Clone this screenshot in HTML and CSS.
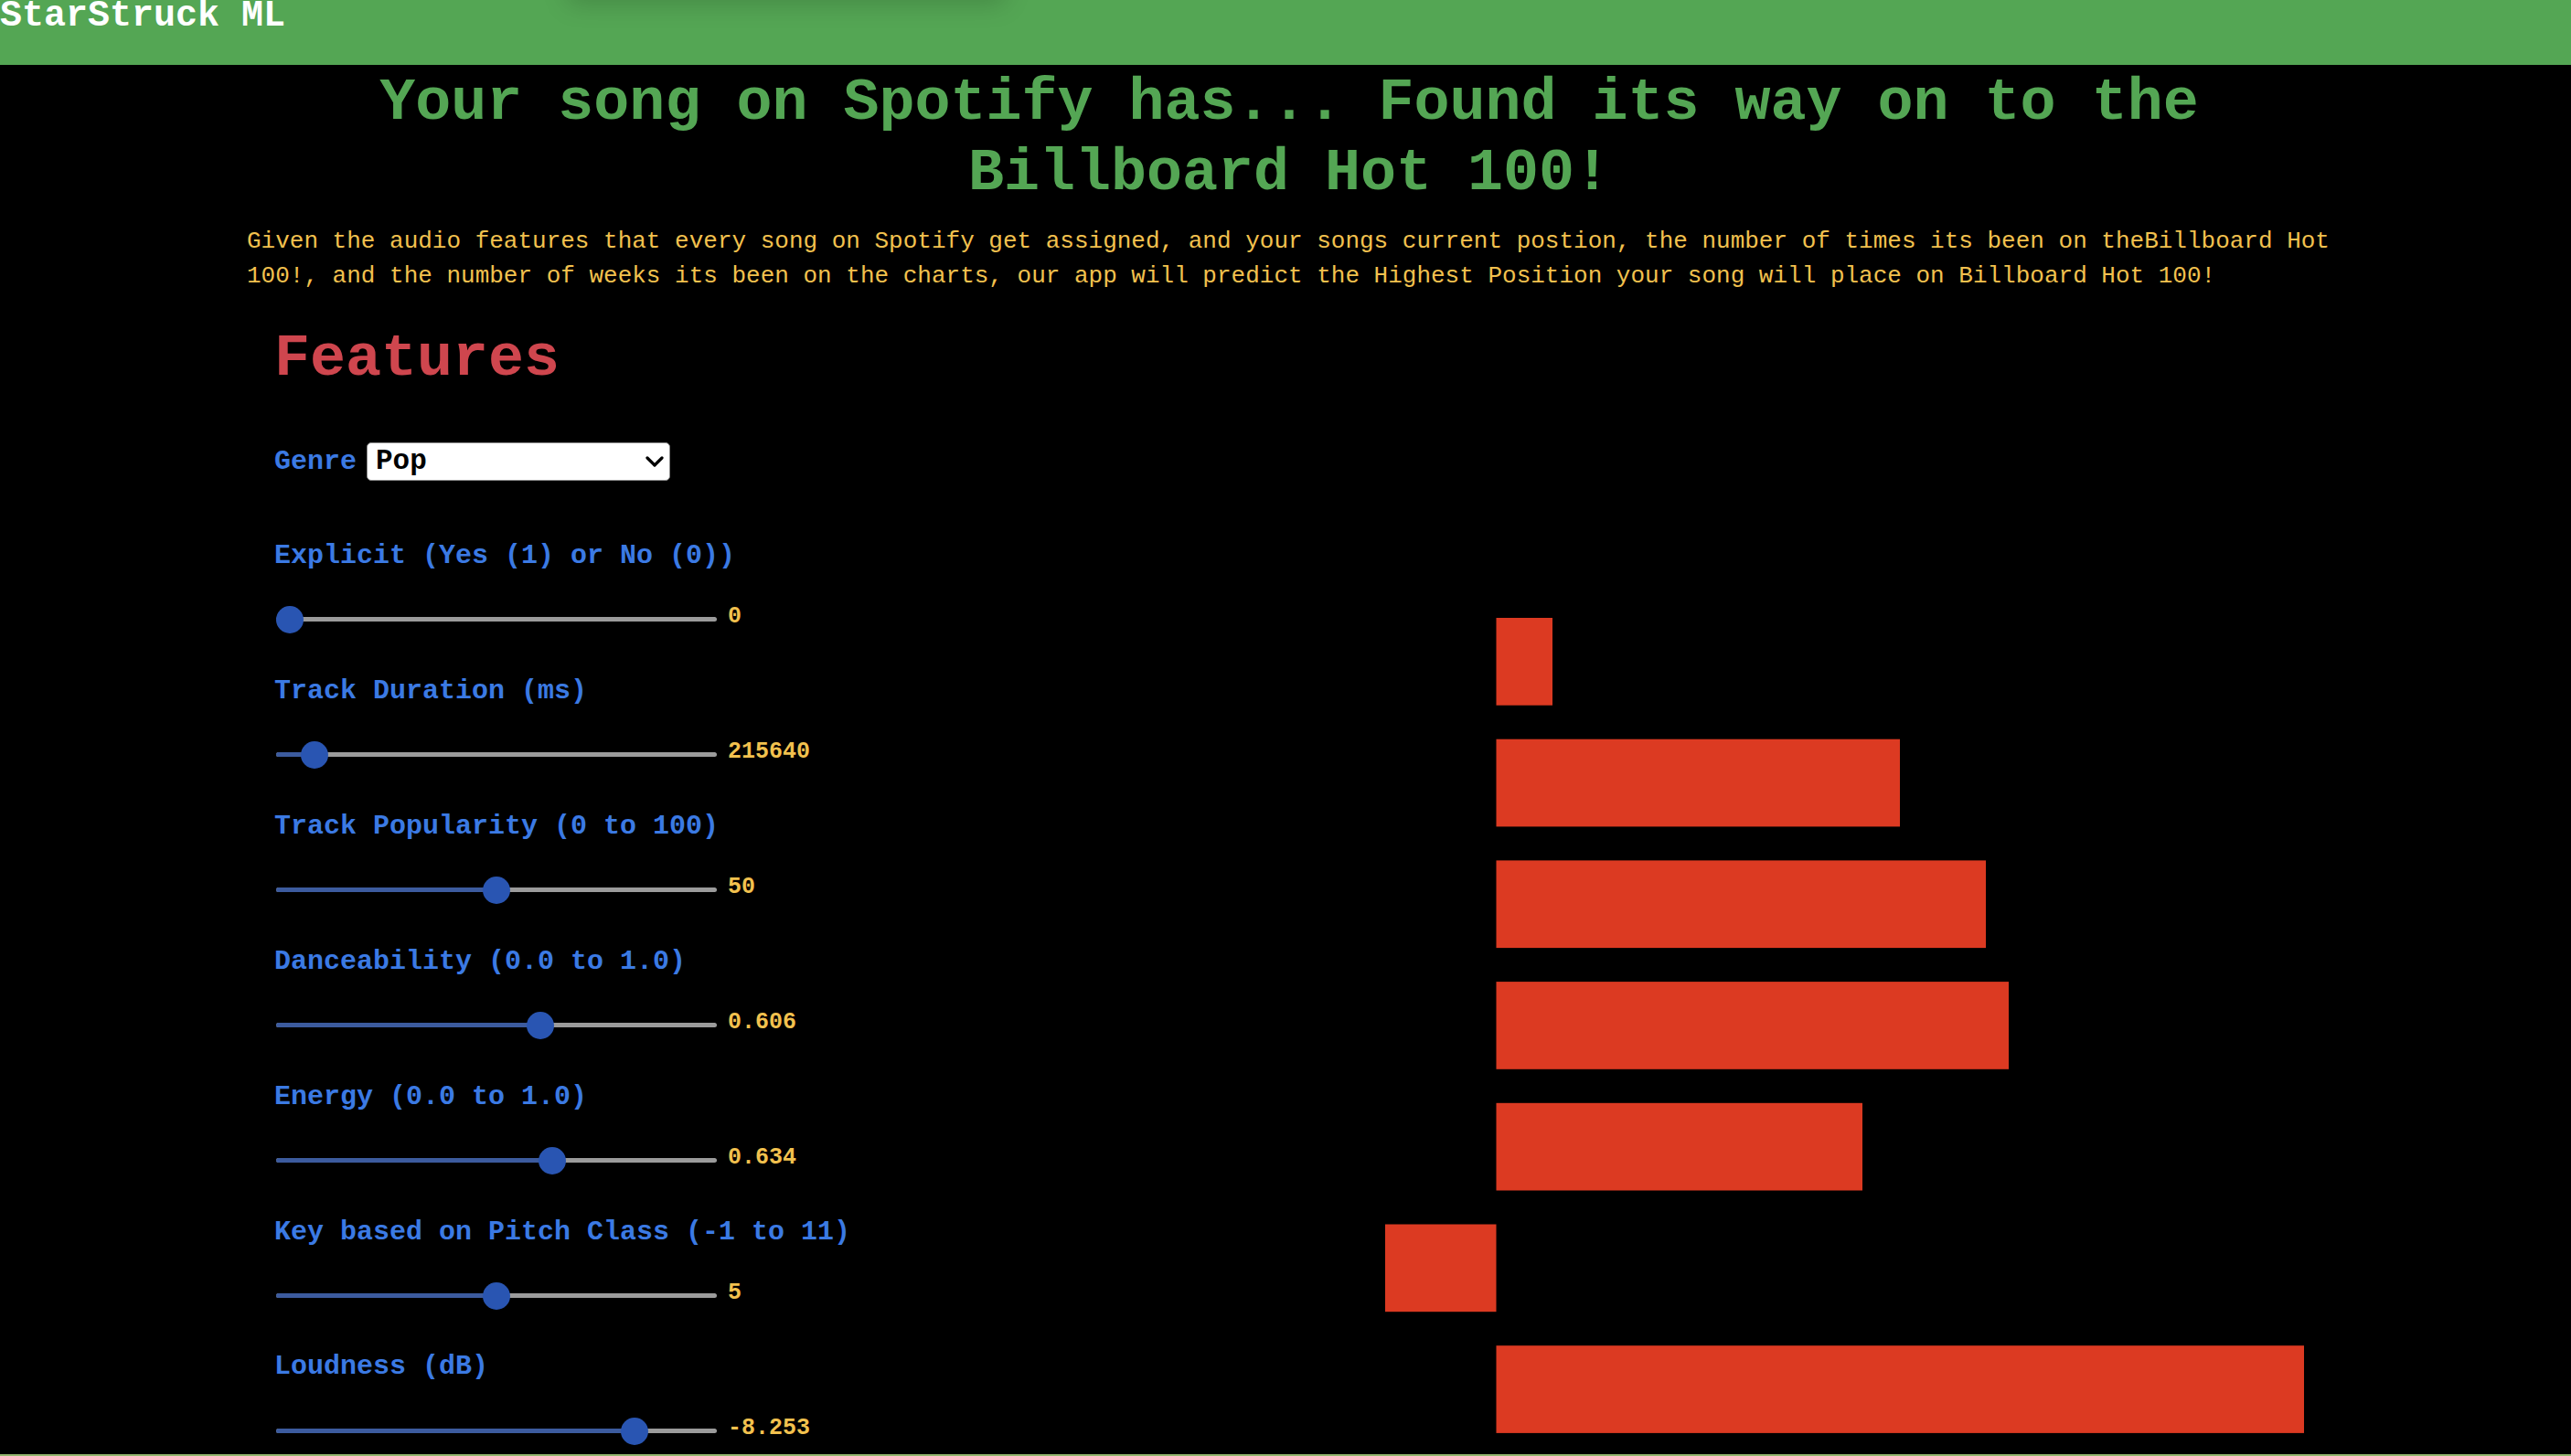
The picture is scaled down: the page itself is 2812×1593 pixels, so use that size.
FILE: index.html
```html
<!DOCTYPE html>
<html lang="en">
<head>
<meta charset="utf-8">
<title>StarStruck ML</title>
<link rel="stylesheet" href="styles.css">
</head>
<body>
<header class="topbar">
  <span class="brand">StarStruck ML</span>
  <div class="topbar-shade"></div>
</header>

<h1 class="headline">Your song on Spotify has... Found its way on to the Billboard Hot 100!</h1>

<p class="intro">Given the audio features that every song on Spotify get assigned, and your songs current postion, the number of times its been on theBillboard Hot 100!, and the number of weeks its been on the charts, our app will predict the Highest Position your song will place on Billboard Hot 100!</p>

<main class="main">
  <section class="features">
    <h2 class="features-title">Features</h2>

    <div class="genre-row">
      <label class="field-label" for="genre">Genre</label>
      <div class="select-wrap">
        <select id="genre" class="genre-select">
          <option>Pop</option>
          <option>Rock</option>
          <option>Hip-Hop</option>
          <option>Country</option>
        </select>
        <svg class="chevron" width="20" height="12" viewBox="0 0 20 12"><path d="M2 2 L10 10 L18 2" fill="none" stroke="#000" stroke-width="3.2" stroke-linecap="round" stroke-linejoin="round"/></svg>
      </div>
    </div>

    <div class="feature">
      <div class="field-label">Explicit (Yes (1) or No (0))</div>
      <div class="slider-row">
        <div class="slider" style="--p:0"><div class="slider-fill"></div><div class="slider-thumb"></div></div>
        <span class="slider-value">0</span>
      </div>
    </div>

    <div class="feature">
      <div class="field-label">Track Duration (ms)</div>
      <div class="slider-row">
        <div class="slider" style="--p:0.06"><div class="slider-fill"></div><div class="slider-thumb"></div></div>
        <span class="slider-value">215640</span>
      </div>
    </div>

    <div class="feature">
      <div class="field-label">Track Popularity (0 to 100)</div>
      <div class="slider-row">
        <div class="slider" style="--p:0.5"><div class="slider-fill"></div><div class="slider-thumb"></div></div>
        <span class="slider-value">50</span>
      </div>
    </div>

    <div class="feature">
      <div class="field-label">Danceability (0.0 to 1.0)</div>
      <div class="slider-row">
        <div class="slider" style="--p:0.606"><div class="slider-fill"></div><div class="slider-thumb"></div></div>
        <span class="slider-value">0.606</span>
      </div>
    </div>

    <div class="feature">
      <div class="field-label">Energy (0.0 to 1.0)</div>
      <div class="slider-row">
        <div class="slider" style="--p:0.634"><div class="slider-fill"></div><div class="slider-thumb"></div></div>
        <span class="slider-value">0.634</span>
      </div>
    </div>

    <div class="feature">
      <div class="field-label">Key based on Pitch Class (-1 to 11)</div>
      <div class="slider-row">
        <div class="slider" style="--p:0.5"><div class="slider-fill"></div><div class="slider-thumb"></div></div>
        <span class="slider-value">5</span>
      </div>
    </div>

    <div class="feature">
      <div class="field-label">Loudness (dB)</div>
      <div class="slider-row">
        <div class="slider" style="--p:0.834"><div class="slider-fill"></div><div class="slider-thumb"></div></div>
        <span class="slider-value">-8.253</span>
      </div>
    </div>
  </section>

  <section class="chart">
    <svg class="bars" width="1120" height="960" viewBox="0 0 1120 960">
      <rect x="156.5" y="36" width="61.5" height="95.7"/>
      <rect x="156.5" y="168.7" width="441.5" height="95.7"/>
      <rect x="156.5" y="301.4" width="535.5" height="95.7"/>
      <rect x="156.5" y="434.1" width="560.5" height="95.7"/>
      <rect x="156.5" y="566.8" width="400.5" height="95.7"/>
      <rect x="35" y="699.5" width="121.5" height="95.7"/>
      <rect x="156.5" y="832.2" width="883.5" height="95.7"/>
    </svg>
  </section>
</main>

<div class="bottom-edge"></div>
</body>
</html>
```

FILE: styles.css
```css
html, body {
  margin: 0;
  padding: 0;
  background: #000;
}

body {
  font-family: "Liberation Mono", "Courier New", monospace;
  font-weight: bold;
  overflow: hidden;
}

.topbar {
  position: relative;
  height: 71px;
  background: #54a654;
}

.brand {
  display: block;
  font-size: 40px;
  line-height: 35px;
  color: #fff;
  font-weight: bold;
}

.topbar-shade {
  position: absolute;
  top: -30px;
  left: 625px;
  width: 470px;
  height: 30px;
  box-shadow: 0 0 28px 4px rgba(0, 0, 0, 0.18);
}

.headline {
  width: 2200px;
  margin: 4px auto 0;
  padding-left: 8px;
  font-size: 65px;
  line-height: 77px;
  text-align: center;
  color: #54a654;
  font-weight: bold;
}

.intro {
  width: 2310px;
  margin: 17px 0 0 270px;
  font-size: 26px;
  line-height: 37.5px;
  font-weight: normal;
  color: #f2c14e;
}

.main {
  display: flex;
  padding-left: 300px;
}

.features {
  width: 1180px;
  flex: none;
}

.features-title {
  margin: 32.2px 0 0;
  font-size: 65px;
  line-height: 80px;
  color: #cf464e;
  font-weight: bold;
}

.genre-row {
  display: flex;
  align-items: center;
  gap: 11px;
  height: 42px;
  margin-top: 50.4px;
}

.field-label {
  font-size: 30px;
  line-height: 40px;
  color: #3b7ae4;
  font-weight: bold;
}

.select-wrap {
  position: relative;
  width: 332px;
  height: 42px;
}

.genre-select {
  appearance: none;
  -webkit-appearance: none;
  box-sizing: border-box;
  width: 100%;
  height: 100%;
  margin: 0;
  padding: 0 0 0 9px;
  border: 1.5px solid #8c8c8c;
  border-radius: 5px;
  background: #fff;
  color: #000;
  font-family: "Liberation Mono", "Courier New", monospace;
  font-weight: bold;
  font-size: 31px;
}

.chevron {
  position: absolute;
  right: 7px;
  top: 15px;
  pointer-events: none;
}

.feature {
  margin-top: 62px;
}

.feature + .feature {
  margin-top: 42.7px;
}

.feature .field-label {
  margin-bottom: 35.3px;
}

.slider-row {
  display: flex;
  align-items: center;
  height: 30px;
}

.slider {
  position: relative;
  width: 482px;
  height: 5px;
  margin-left: 2px;
  border-radius: 3px;
  background: #9b9b9b;
}

.slider-fill {
  height: 100%;
  width: calc(var(--p) * (100% - 30px) + 15px);
  border-radius: 3px;
  background: #3c5b9e;
}

.slider-thumb {
  position: absolute;
  top: 50%;
  left: calc(var(--p) * (100% - 30px));
  width: 30px;
  height: 30px;
  margin-top: -15px;
  border-radius: 50%;
  background: #2955b2;
}

.slider-value {
  margin-left: 12px;
  margin-bottom: 6px;
  font-size: 25px;
  line-height: 30px;
  color: #f2c14e;
  font-weight: bold;
}

.chart {
  flex: none;
  margin-top: 318.8px;
}

.bars {
  display: block;
}

.bars rect {
  fill: #dc3a22;
}

.bottom-edge {
  position: fixed;
  left: 0;
  right: 0;
  bottom: 0;
  height: 2px;
  background: #92b66e;
}
```
